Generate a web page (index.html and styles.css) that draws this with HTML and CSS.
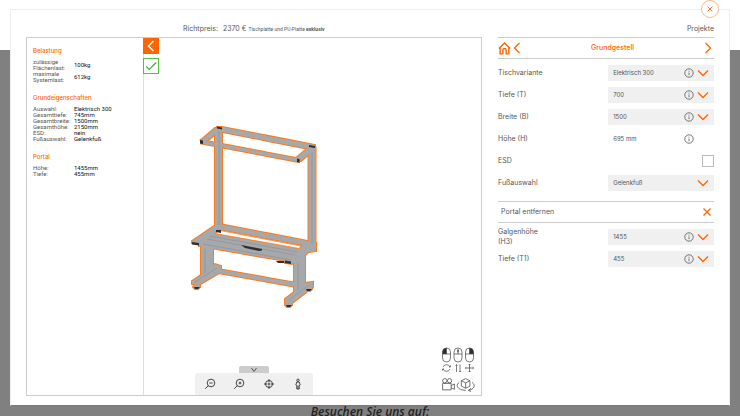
FILE: index.html
```
<!DOCTYPE html>
<html lang="de">
<head>
  <meta charset="UTF-8">
  <meta name="viewport" content="width=device-width, initial-scale=1.0">
  <title>Konfigurator</title>
  <link rel="stylesheet" href="styles.css">
</head>
<body>
  <svg class="sprite" aria-hidden="true">
    <symbol id="chevron-down" viewBox="0 0 12 12"><path d="M1 3.500 6 8.500l5-5"/></symbol>
    <symbol id="chevron-left" viewBox="0 0 12 12"><path d="M8.500 1 3.500 6l5 5"/></symbol>
    <symbol id="chevron-right" viewBox="0 0 12 12"><path d="M3.500 1 8.500 6l-5 5"/></symbol>
    <symbol id="cross" viewBox="0 0 12 12"><path d="M2.500 2.500l7 7M9.500 2.500l-7 7"/></symbol>
    <symbol id="info" viewBox="0 0 10 10"><circle cx="5" cy="5" r="4.200"/><path d="M5 4.500v2.700M5 2.700v1"/></symbol>
  </svg>

  <div class="page">
    <p class="page-title">Besuchen Sie uns auf:</p>
  </div>

  <main class="dialog">
    <button class="close" type="button" aria-label="Schließen">
      <svg class="icon"><use href="#cross"/></svg>
    </button>

    <header class="topbar">
      <span class="price-label">Richtpreis:</span>
      <span class="price">2370 €</span>
      <span class="price-note">Tischplatte und PU-Platte <b>exklusiv</b></span>
      <a class="projects" href="#projekte">Projekte</a>
    </header>

    <div class="content">
      <section class="viewer">
        <svg class="model" viewBox="188 123 132 186" role="img" aria-label="Arbeitstisch">
          <defs>
            <g id="frame">
              <path d="M215 130h7v97l-4 4-3-4zM308.500 150l7-3v103h-7z"/>
              <path d="M217 126h5l93 18v3l-6 1-92-18z"/>
              <path d="M201 139l14-12h5v2l-14 12zM296 157l13-11 6 1v1l-14 12z"/>
              <path d="M201 139l98 18.500v3.500l-98-18.500z"/>
              <path d="M222 223.500l86 16.500v5l-87-16.500z"/>
              <path d="M192 240l25-17 5 1v4l-12 9-4 6-14-1z"/>
              <path d="M199 241l11-9 90 16-9 13-92-16z"/>
              <path d="M285 259l22-19 9 2v8l-7 1-17 12-7-1z"/>
              <path d="M201 243l12 3v26l-12 4zM294 258l11-4v32l-11 6z"/>
              <path d="M192 280l9-6 14-11 6 2v6l-22 13-7-1zM285 298l9-7 11-9 8-1v5l-22 17-6-1z"/>
              <path d="M215 267.500l79 14v4l-79-14z"/>
              <path d="M194 284h6v2l-2 2h-3l-2-2zM286 302h6v2l-2 2h-3l-2-2zM306 286h6v2l-2 2h-3l-2-2z"/>
            </g>
          </defs>
          <use class="outline" href="#frame"/>
          <use class="metal" href="#frame"/>
          <path class="seam" d="M219 131v93M312 152v90M203 243l88 16M207 238l88 16M210 235l87 16M205 248v24M298 262v27M195 281l22-14M289 299l20-15"/>
          <path class="gap" d="M220 229.500l81 15.500-2 2.500-84-15z"/>
          <path class="dark" d="M217 125.500l5 1v2l-5-1zM200 139l3 .6v3.400l-3-.6zM309 144l6 1v2l-6-1zM297 157.500l2.500.5v3.500l-2.500-.5zM192 241l7 1v2.500l-7-1zM285 259.500l6 1v2.500l-6-1zM241 244l21 4v1.500l-3 .5-14-3zM276 260h8v2h-6zM216 229h5v3l-5-1zM194 286h6l-2 2h-3zM286 304h6l-2 2h-3zM306 288h6l-2 2h-3z"/>
        </svg>

        <aside class="summary">
          <h2>Belastung</h2>
          <dl>
            <dt>zulässige Flächenlast:</dt><dd>100kg</dd>
            <dt>maximale Systemlast:</dt><dd>612kg</dd>
          </dl>
          <h2>Grundeigenschaften</h2>
          <dl>
            <dt>Auswahl:</dt><dd>Elektrisch 300</dd>
            <dt>Gesamttiefe:</dt><dd>745mm</dd>
            <dt>Gesamtbreite:</dt><dd>1500mm</dd>
            <dt>Gesamthöhe:</dt><dd>2150mm</dd>
            <dt>ESD:</dt><dd>nein</dd>
            <dt>Fußauswahl:</dt><dd>Gelenkfuß</dd>
          </dl>
          <h2>Portal</h2>
          <dl>
            <dt>Höhe:</dt><dd>1455mm</dd>
            <dt>Tiefe:</dt><dd>455mm</dd>
          </dl>
          <div class="summary-actions">
            <button class="collapse" type="button" aria-label="Einklappen">
              <svg viewBox="0 0 16 16"><path d="M10.500 3 5.500 8l5 5"/></svg>
            </button>
            <button class="valid" type="button" aria-label="Gültig">
              <svg viewBox="0 0 16 16"><path d="M2.500 8.500l3.500 3.500 8-8"/></svg>
            </button>
          </div>
        </aside>

        <div class="tools">
          <button class="tools-tab" type="button" aria-label="Werkzeuge ausblenden">
            <svg viewBox="0 0 8 6"><path d="M1.500 1 4 4.500 6.500 1"/></svg>
          </button>
          <div class="tools-bar">
            <button type="button" aria-label="Verkleinern">
              <svg viewBox="0 0 12 12"><circle cx="7" cy="5" r="3.800"/><path d="M4.200 7.800 1.200 10.800M5.300 5h3.400"/></svg>
            </button>
            <button type="button" aria-label="Vergrößern">
              <svg viewBox="0 0 12 12"><circle cx="7" cy="5" r="3.800"/><path d="M4.200 7.800 1.200 10.800M5.600 5h2.800M7 3.600v2.800"/></svg>
            </button>
            <button type="button" aria-label="Zentrieren">
              <svg viewBox="0 0 12 12"><circle cx="6" cy="6" r="3.500"/><circle cx="6" cy="6" r="1"/><path d="M6 1v3M6 8v3M1 6h3M8 6h3"/></svg>
            </button>
            <button type="button" aria-label="Person anzeigen">
              <svg viewBox="0 0 12 12"><circle cx="6" cy="2.300" r="1.200"/><path d="M4.800 4h2.400l1 3-1 .5V11H4.800V7.500l-1-.5zM6 7.500V11"/></svg>
            </button>
          </div>
        </div>

        <div class="controls">
          <svg class="mouse-help" viewBox="0 0 34 26" aria-hidden="true">
            <path class="dark" d="M5.500 1v6h-4V4.500A4 4 0 0 1 5.500 1zM28.500 1v6h4V4.500A4 4 0 0 0 28.500 1zM16.300 2.500h1.400v3h-1.400z"/>
            <rect x="1.500" y="1" width="8" height="14" rx="4"/>
            <rect x="13" y="1" width="8" height="14" rx="4"/>
            <rect x="24.500" y="1" width="8" height="14" rx="4"/>
            <path d="M1.500 7h8M13 7h8M24.500 7h8M5.500 1v6M28.500 1v6M17 5.500V7"/>
            <path d="M2 20a3.800 3.800 0 0 1 7 0M9 22a3.800 3.800 0 0 1-7 0M9.500 18.500V20H8M1.500 23.500V22H3"/>
            <path d="M15.500 18v7M14.700 18.500l.8-1 .8 1M19 17.500v7M18.200 24l.8 1 .8-1"/>
            <path d="M28.500 17v8M24.500 21h8M27.700 18l.8-1 .8 1M27.700 24l.8 1 .8-1M25.300 20.200l-1 .8 1 .8M31.700 20.200l1 .8-1 .8"/>
          </svg>
          <div class="views">
            <button type="button" aria-label="Kamera">
              <svg viewBox="0 0 14 14"><circle cx="3.500" cy="3.500" r="2"/><circle cx="8" cy="3.500" r="2"/><path d="M1.500 6h8v6h-8zM9.500 8l3-1.500v5l-3-1.500"/></svg>
            </button>
            <button type="button" aria-label="Ansicht drehen">
              <svg viewBox="0 0 18 14"><path d="M5 3.500 9 1.500l4 2v5l-4 2-4-2zM5 3.500l4 2 4-2M9 5.500v5"/><path d="M3 5C-1 8 1.500 12 9 12.500M15 5c4 3 1.500 6.500-3 7.300M14 10.500l-2.500 2 2.500 1"/></svg>
            </button>
          </div>
        </div>
      </section>

      <form class="options">
        <div class="options-head">
          <button type="button" aria-label="Start">
            <svg class="icon home" viewBox="0 0 12 12"><path d="M.8 6 6 1l5.200 5M2 5v6h2.500V7.500a1.500 1.500 0 0 1 3 0V11H10V5"/></svg>
          </button>
          <button type="button" aria-label="Zurück"><svg class="icon"><use href="#chevron-left"/></svg></button>
          <h1>Grundgestell</h1>
          <button type="button" aria-label="Weiter"><svg class="icon"><use href="#chevron-right"/></svg></button>
        </div>

        <div class="group">
          <div class="row">
            <label for="variant">Tischvariante</label>
            <div class="field">
              <select id="variant"><option>Elektrisch 300</option></select>
              <button type="button" aria-label="Info Tischvariante"><svg class="info"><use href="#info"/></svg></button>
              <svg class="icon"><use href="#chevron-down"/></svg>
            </div>
          </div>
          <div class="row">
            <label for="depth">Tiefe (T)</label>
            <div class="field">
              <select id="depth"><option>700</option></select>
              <button type="button" aria-label="Info Tiefe"><svg class="info"><use href="#info"/></svg></button>
              <svg class="icon"><use href="#chevron-down"/></svg>
            </div>
          </div>
          <div class="row">
            <label for="width">Breite (B)</label>
            <div class="field">
              <select id="width"><option>1500</option></select>
              <button type="button" aria-label="Info Breite"><svg class="info"><use href="#info"/></svg></button>
              <svg class="icon"><use href="#chevron-down"/></svg>
            </div>
          </div>
          <div class="row">
            <label for="height">Höhe (H)</label>
            <div class="field plain">
              <output id="height">695 mm</output>
              <button type="button" aria-label="Info Höhe"><svg class="info"><use href="#info"/></svg></button>
              <span class="icon"></span>
            </div>
          </div>
          <div class="row">
            <label for="esd">ESD</label>
            <input type="checkbox" id="esd">
          </div>
          <div class="row">
            <label for="foot">Fußauswahl</label>
            <div class="field">
              <select id="foot"><option>Gelenkfuß</option></select>
              <svg class="icon"><use href="#chevron-down"/></svg>
            </div>
          </div>
        </div>

        <button class="remove" type="button">
          Portal entfernen
          <svg class="icon"><use href="#cross"/></svg>
        </button>

        <div class="group">
          <div class="row">
            <label for="gallows">Galgenhöhe (H3)</label>
            <div class="field">
              <select id="gallows"><option>1455</option></select>
              <button type="button" aria-label="Info Galgenhöhe"><svg class="info"><use href="#info"/></svg></button>
              <svg class="icon"><use href="#chevron-down"/></svg>
            </div>
          </div>
          <div class="row">
            <label for="depth-portal">Tiefe (T1)</label>
            <div class="field">
              <select id="depth-portal"><option>455</option></select>
              <button type="button" aria-label="Info Tiefe T1"><svg class="info"><use href="#info"/></svg></button>
              <svg class="icon"><use href="#chevron-down"/></svg>
            </div>
          </div>
        </div>
      </form>
    </div>
  </main>
</body>
</html>
```

FILE: styles.css
```
* {
  box-sizing: border-box;
}
body {
  margin: 0;
  font-family: Inter, "Open Sans", sans-serif;
  font-size: 7px;
  line-height: 10px;
  color: #555;
}
h1, h2, p, dl, dd {
  margin: 0;
}
button {
  display: flex;
  align-items: center;
  justify-content: center;
  padding: 0;
  border: 0;
  background: none;
  font: inherit;
  color: inherit;
}
svg {
  display: block;
  fill: none;
  stroke: currentColor;
}
.sprite {
  position: absolute;
  width: 0;
  height: 0;
}
.icon {
  width: 12px;
  height: 12px;
  flex: none;
  color: #ff6400;
  stroke-width: 1.3;
}

/* page behind the dialog */
.page {
  display: flex;
  align-items: flex-end;
  justify-content: center;
  height: 100vh;
  overflow: hidden;
  border-top: 50px solid #fff;
  background: #808080;
}
.page-title {
  line-height: 8px;
  font-family: "Open Sans", sans-serif;
  font-size: 12px;
  font-weight: 600;
  font-style: italic;
  color: #222;
}

/* dialog */
.dialog {
  position: fixed;
  inset: 9px 10px 10px;
  display: flex;
  flex-direction: column;
  padding: 0 15px 9px;
  border: 1px solid #eee;
  border-bottom-color: #777;
  background: #fff;
}
.close {
  position: absolute;
  top: -10px;
  right: 10px;
  width: 18px;
  height: 18px;
  border: 1px solid #ffb78c;
  border-radius: 50%;
  background: #fff;
}
.close .icon {
  width: 8px;
  height: 8px;
}
.topbar {
  display: flex;
  align-items: center;
  height: 27px;
  padding: 10px 0 0 157px;
}
.price {
  margin: 0 2px 0 5px;
}
.price-note {
  font-family: Roboto, sans-serif;
  font-size: 5px;
}
.projects {
  margin-left: auto;
  color: inherit;
  text-decoration: none;
}
.content {
  display: grid;
  grid-template-columns: 19fr 9fr;
  gap: 16px;
  flex: 1;
  min-height: 0;
}

/* 3d view */
.viewer {
  position: relative;
  display: flex;
  align-items: center;
  justify-content: center;
  border: 1px solid #ccc;
}
.model {
  width: 132px;
  height: 186px;
  stroke: none;
}
.outline {
  fill: #ff7a1a;
  stroke: #ff7a1a;
  stroke-width: 2;
}
.metal {
  fill: #a6a8aa;
}
.seam {
  stroke: #8b8e90;
  stroke-width: 0.6;
}
.gap {
  fill: #fff;
  stroke: #ff7a1a;
  stroke-width: 0.8;
}
.dark {
  fill: #2b3036;
  stroke: none;
}
.summary {
  position: absolute;
  inset: 0 auto 0 0;
  width: 117px;
  padding: 9px 6px;
  border-right: 1px solid #ddd;
  font-family: Roboto, sans-serif;
  font-size: 6px;
  line-height: 6px;
}
.summary h2 {
  margin-bottom: 4px;
  font-family: Inter, sans-serif;
  font-size: 6px;
  font-weight: 500;
  line-height: 8px;
  color: #ff6400;
}
.summary dl {
  display: grid;
  grid-template-columns: 41px 1fr;
  align-items: center;
  margin-bottom: 11px;
}
.summary dd {
  color: #111;
}
.summary-actions {
  position: absolute;
  top: 0;
  left: 100%;
  display: grid;
  gap: 4px;
}
.summary-actions button {
  width: 16px;
  height: 16px;
}
.collapse {
  background: #ff6400;
  color: #fff;
  stroke-width: 1.5;
}
.valid {
  border: 1px solid #55bd45;
  color: #3fae2f;
}
.valid svg {
  width: 14px;
  height: 14px;
  stroke-width: 1.4;
}
.tools {
  position: absolute;
  bottom: 0;
  left: 50%;
  transform: translateX(-50%);
  display: flex;
  flex-direction: column;
  align-items: center;
}
.tools-tab {
  width: 30px;
  height: 7px;
  border-radius: 2px 2px 0 0;
  background: #ccc;
}
.tools-tab svg {
  width: 8px;
  height: 6px;
}
.tools-bar {
  display: flex;
  justify-content: space-around;
  width: 118px;
  height: 22px;
  border-radius: 3px 3px 0 0;
  background: #f0f0f0;
  color: #333;
}
.tools-bar svg {
  width: 12px;
  height: 12px;
  stroke-width: 0.9;
}
.controls {
  position: absolute;
  right: 6px;
  bottom: 3px;
  color: #444;
  stroke-width: 0.7;
}
.mouse-help {
  width: 34px;
  height: 26px;
}
.views {
  display: flex;
  justify-content: space-between;
  margin-top: 4px;
}
.views svg {
  width: auto;
  height: 15px;
}

/* options */
.options-head {
  display: flex;
  align-items: center;
  height: 22px;
  border: solid #ccc;
  border-width: 1px 0;
}
.home {
  width: 13px;
  height: 13px;
}
.options-head h1 {
  flex: 1;
  font-size: 7px;
  font-weight: 500;
  text-align: center;
  color: #ff6400;
}
.group {
  display: grid;
  gap: 6px;
  padding: 6px 0 10px;
}
.row {
  display: flex;
  align-items: center;
  justify-content: space-between;
  height: 16px;
}
.row label {
  max-width: 50px;
}
.field {
  display: flex;
  align-items: center;
  width: 49%;
  height: 16px;
  padding: 0 5px;
  background: #f0f0f0;
}
.plain {
  background: none;
}
.field select, .field output {
  flex: 1;
  min-width: 0;
  padding: 0;
  border: 0;
  appearance: none;
  background: none;
  font: inherit;
  font-size: 6px;
  color: #555;
}
.info {
  width: 10px;
  height: 10px;
  margin-right: 3px;
  stroke-width: 0.8;
}
.row input {
  appearance: none;
  width: 12px;
  height: 12px;
  margin: 0;
  border: 1px solid #bbb;
}
.remove {
  justify-content: space-between;
  width: 100%;
  height: 22px;
  padding: 0 1px 0 3px;
  border: solid #ccc;
  border-width: 1px 0;
}
```
